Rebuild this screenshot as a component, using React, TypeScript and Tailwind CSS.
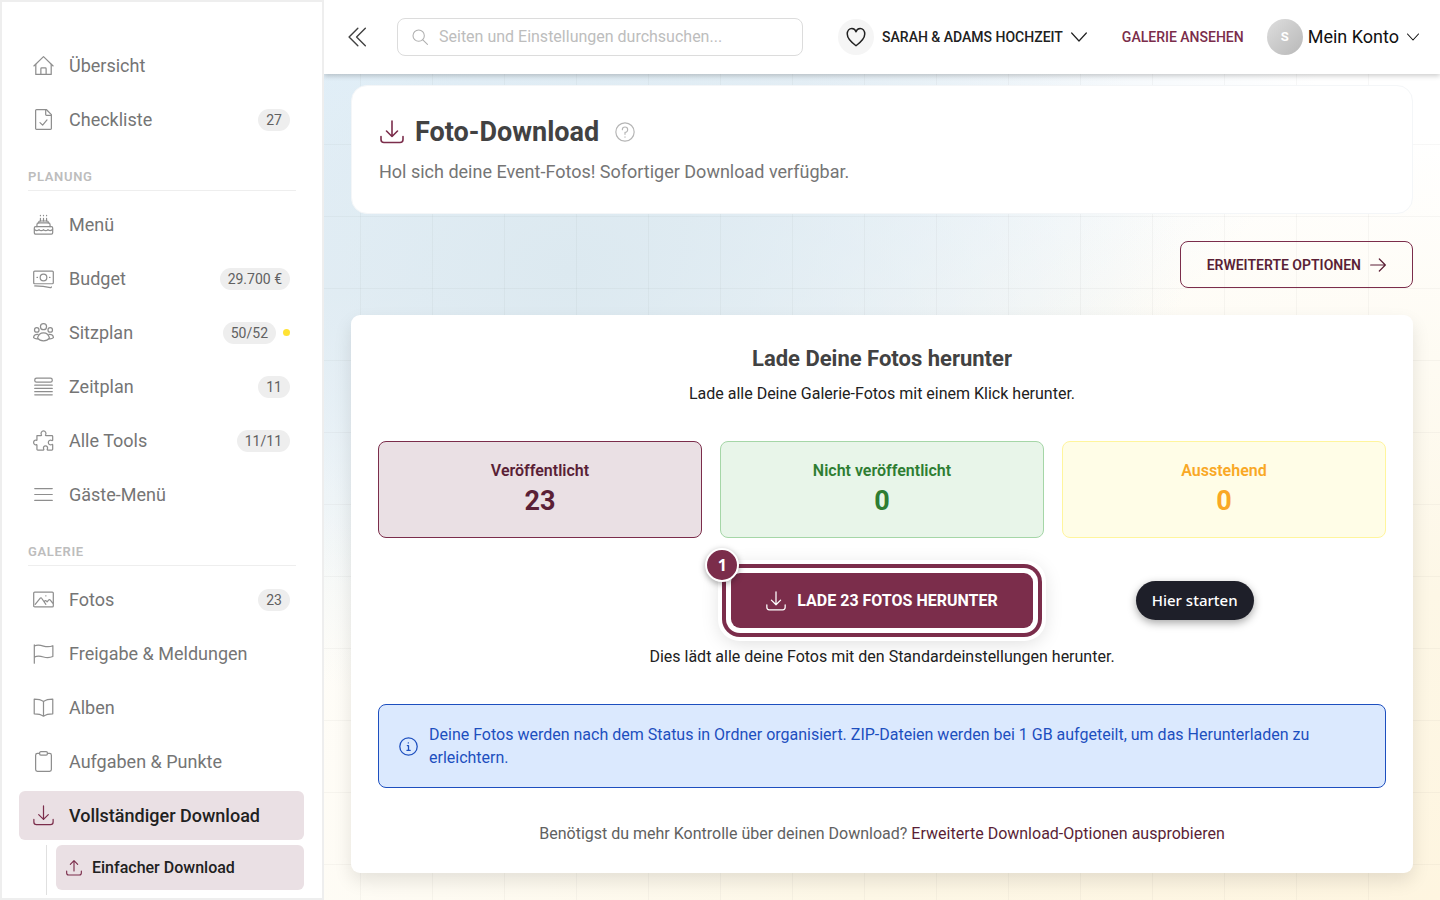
import type { ReactNode } from "react";
import clsx from "clsx";

type IconName =
  | "home"
  | "checklist"
  | "cake"
  | "cash"
  | "people"
  | "timeline"
  | "puzzle"
  | "lines"
  | "image"
  | "flag"
  | "book"
  | "clipboard"
  | "download"
  | "upload"
  | "search"
  | "collapse"
  | "heart"
  | "chevron"
  | "arrow"
  | "help"
  | "info";

const icons: Record<IconName, ReactNode> = {
  home: (
    <>
      <path d="M1 12.5 12 1.8l11 10.7" />
      <path d="M3.2 10.6v11.6h17.6V10.6" />
      <path d="M9 22.2v-6.6a1 1 0 0 1 1-1h4a1 1 0 0 1 1 1v6.6" />
    </>
  ),
  checklist: (
    <>
      <path d="M3 1.8a1 1 0 0 1 1-1h11.5L21 6.5v15.7a1 1 0 0 1-1 1H4a1 1 0 0 1-1-1z" />
      <path d="M14.5 1v5.2a1 1 0 0 0 1 1H21" />
      <path d="m8 15.5 3 3 5-6" />
    </>
  ),
  cake: (
    <>
      <rect x="1.5" y="14.5" width="21" height="8.5" rx="1.5" />
      <path d="M1.7 17.5c2 2 3.5 2 5.2.4 1.7 1.6 3.4 1.6 5.1 0 1.7 1.6 3.4 1.6 5.1 0 1.7 1.6 3.2 1.6 5.2-.4" />
      <path d="M4.5 14.5v-2.3a2 2 0 0 1 2-2h11a2 2 0 0 1 2 2v2.3" />
      <path d="M6.5 10.2V9.5A1.5 1.5 0 0 1 8 8h8a1.5 1.5 0 0 1 1.5 1.5v.7" />
      <path d="M8.5 8V5M12 8V5M15.5 8V5M8.5 2v-.5M12 2v-.5M15.5 2v-.5" />
    </>
  ),
  cash: (
    <>
      <rect x="0.8" y="3.5" width="22.4" height="14.5" rx="1.2" />
      <circle cx="12" cy="10.8" r="3.8" />
      <path d="M4.6 10.8h.5M18.9 10.8h.5" />
      <path d="M2 20.5c6 .2 12 .7 17.8 2 .7.1 1.2-.3 1.2-1" />
    </>
  ),
  people: (
    <>
      <circle cx="12" cy="5.3" r="3.5" />
      <circle cx="4.3" cy="9" r="2.6" />
      <circle cx="19.7" cy="9" r="2.6" />
      <path d="M5.2 18.5c.8-4 3.3-6 6.8-6s6 2 6.8 6c-1.8 2.3-4 3-6.8 3s-5-.7-6.8-3z" />
      <path d="M5.3 19.3c-2 .2-3.6-.3-4.7-1.4.3-2.7 2-4.2 5.2-3.8M18.7 19.3c2 .2 3.6-.3 4.7-1.4-.3-2.7-2-4.2-5.2-3.8" />
    </>
  ),
  timeline: (
    <>
      <rect x="2" y="2.5" width="20" height="4.5" rx="2" />
      <path d="M2 10.5h20M2 14.2h20M2 17.9h20M2 21.5h20" />
    </>
  ),
  puzzle: (
    <path d="M4.5 6.5h4.7c.6 0 .7-.5.4-1C8.5 3.5 9.8 1 12 1s3.5 2.5 2.4 4.5c-.3.5-.2 1 .4 1h6.7a1 1 0 0 1 1 1v4c0 .6-.5.7-1 .4-2-1.1-4 .3-4 2.3s2 3.4 4 2.3c.5-.3 1-.2 1 .4v5a1 1 0 0 1-1 1h-4.7c-.6 0-.7-.5-.4-1 .9-1.9-.3-3.7-2.1-3.7s-3 1.8-2.1 3.7c.3.5.2 1-.4 1H5.5a1 1 0 0 1-1-1v-4.6c0-.6-.5-.7-1-.4C2.3 17.5.7 16 .7 14.2s1.6-3.3 3.3-2.5c.3.2.5 0 .5-.4z" />
  ),
  lines: <path d="M2 5.2h20M2 12h20M2 18.8h20" />,
  image: (
    <>
      <rect x="0.8" y="3.5" width="22.4" height="17" rx="1.2" />
      <path d="M2.5 17.5 8.3 10.5a1 1 0 0 1 1.6.1l4.8 6.9M12.8 14.8l.4-.9a1.3 1.3 0 0 1 2.2 0l.7.7 1.7-2a1.3 1.3 0 0 1 2 0l2.7 3.4" />
      <path d="M14.6 7.8h.2" />
    </>
  ),
  flag: (
    <path d="M1.5 23V2M1.5 3.4c3.6-1.6 6.8-1 10.5.1s7 1.2 10.7-.4v12.4c-3.7 1.6-7 1.6-10.7.5s-6.9-1.6-10.5.1" />
  ),
  book: (
    <path d="M12 5.2c-2.8-2-6.5-2.7-10.6-2.7v16.7c4.1 0 7.8.7 10.6 2.7 2.8-2 6.5-2.7 10.6-2.7V2.5C18.5 2.5 14.8 3.2 12 5.2zm0 0v16.5" />
  ),
  clipboard: (
    <>
      <path d="M7.5 2.8H5a2 2 0 0 0-2 2v16.4a2 2 0 0 0 2 2h14a2 2 0 0 0 2-2V4.8a2 2 0 0 0-2-2h-2.5" />
      <rect x="7.5" y="0.8" width="9" height="3.8" rx="1.5" />
    </>
  ),
  download: (
    <>
      <path d="M12 1v15.5M6.5 11l5.5 5.5 5.5-5.5" />
      <path d="M1 16.5v3a3 3 0 0 0 3 3h16a3 3 0 0 0 3-3v-3" />
    </>
  ),
  upload: (
    <>
      <path d="M12 16.5V1M6.5 6.5 12 1l5.5 5.5" />
      <path d="M1 16.5v3a3 3 0 0 0 3 3h16a3 3 0 0 0 3-3v-3" />
    </>
  ),
  search: (
    <>
      <circle cx="10" cy="10" r="8.5" />
      <path d="m16.2 16.2 7 7" />
    </>
  ),
  collapse: <path d="M13 1.5 2.5 12 13 22.5M22 1.5 11.5 12 22 22.5" />,
  heart: (
    <path d="M12 22.5c-5.5-4-10.5-8.3-10.5-14C1.5 4.5 4 1.7 7 1.7c2.4 0 4.3 1.5 5 4 .7-2.5 2.6-4 5-4 3 0 5.5 2.8 5.5 6.8 0 5.7-5 10-10.5 14z" />
  ),
  chevron: <path d="m1 6 11 12L23 6" />,
  arrow: <path d="M1 12h22M14 3l9 9-9 9" />,
  help: (
    <>
      <circle cx="12" cy="12" r="11" />
      <path d="M8.8 9.2A3.2 3.2 0 1 1 12 12.4v2.4M12 17.8v.5" />
    </>
  ),
  info: (
    <>
      <circle cx="12" cy="12" r="11" />
      <path d="M10.5 10.8H12v6M10 16.8h4.2M11.7 7.5h.2" />
    </>
  ),
};

function Icon({ name, className, stroke = 1.4 }: { name: IconName; className?: string; stroke?: number }) {
  return (
    <svg
      viewBox="0 0 24 24"
      fill="none"
      stroke="currentColor"
      strokeWidth={stroke}
      strokeLinecap="round"
      strokeLinejoin="round"
      aria-hidden="true"
      className={clsx("shrink-0", className)}
    >
      {icons[name]}
    </svg>
  );
}

interface NavItem {
  label: string;
  icon: IconName;
  badge?: string;
  dot?: boolean;
  active?: boolean;
}

const groups: { title?: string; items: NavItem[] }[] = [
  {
    items: [
      { label: "Übersicht", icon: "home" },
      { label: "Checkliste", icon: "checklist", badge: "27" },
    ],
  },
  {
    title: "Planung",
    items: [
      { label: "Menü", icon: "cake" },
      { label: "Budget", icon: "cash", badge: "29.700 €" },
      { label: "Sitzplan", icon: "people", badge: "50/52", dot: true },
      { label: "Zeitplan", icon: "timeline", badge: "11" },
      { label: "Alle Tools", icon: "puzzle", badge: "11/11" },
      { label: "Gäste-Menü", icon: "lines" },
    ],
  },
  {
    title: "Galerie",
    items: [
      { label: "Fotos", icon: "image", badge: "23" },
      { label: "Freigabe & Meldungen", icon: "flag" },
      { label: "Alben", icon: "book" },
      { label: "Aufgaben & Punkte", icon: "clipboard" },
      { label: "Vollständiger Download", icon: "download", active: true },
    ],
  },
];

const stats = [
  { label: "Veröffentlicht", value: 23, style: "border-[#7b2d4b] bg-[#eae0e4] text-[#5a1f36]" },
  { label: "Nicht veröffentlicht", value: 0, style: "border-[#a5d6a7] bg-[#e8f5e9] text-[#2e7d32]" },
  { label: "Ausstehend", value: 0, style: "border-[#fff59d] bg-[#fffde7] text-[#f9a825]" },
];

function Sidebar() {
  return (
    <aside className="sticky top-0 z-20 h-screen w-[324px] shrink-0 overflow-hidden border-2 border-[#eeeeee] bg-white pt-[39px] pr-[18px] pl-[17px]">
      <nav>
        {groups.map((group, i) => (
          <div key={i}>
            {group.title && (
              <h2 className="mt-[23px] mr-2 mb-[9px] ml-[9px] border-b border-[#eeeeee] pb-[3px] text-[13px] leading-5 font-semibold tracking-wider text-[#bdbdbd] uppercase">
                {group.title}
              </h2>
            )}
            <ul className="flex flex-col gap-[5px]">
              {group.items.map((item) => (
                <li key={item.label}>
                  <a
                    href="#"
                    className={clsx(
                      "flex h-[49px] items-center rounded-md px-[14px] text-lg",
                      item.active ? "bg-[#eae0e4] font-medium text-[#212121]" : "text-[#757575]",
                    )}
                  >
                    <Icon
                      name={item.icon}
                      className={clsx("mr-[15px] size-[21px]", item.active ? "text-[#7b2d4b]" : "text-[#8e8e8e]")}
                    />
                    <span>{item.label}</span>
                    {item.badge && (
                      <span className="ml-auto rounded-full bg-[#eeeeee] px-2 text-sm leading-[22px] text-[#616161]">
                        {item.badge}
                      </span>
                    )}
                    {item.dot && <span className="ml-[7px] size-[7px] rounded-full bg-[#ffe234]" />}
                  </a>
                </li>
              ))}
            </ul>
          </div>
        ))}
        <div className="mt-[5px] ml-[27px] border-l border-[#e0e0e0] pb-[5px] pl-[9px]">
          <a
            href="#"
            className="flex h-[45px] items-center gap-[10px] rounded-md bg-[#eae0e4] pl-[10px] text-base font-medium text-[#212121]"
          >
            <Icon name="upload" className="size-4 text-[#7b2d4b]" stroke={1.7} />
            Einfacher Download
          </a>
        </div>
      </nav>
    </aside>
  );
}

function TopBar() {
  return (
    <header className="sticky top-0 z-10 flex h-[74px] items-center bg-white pr-[21px] pl-[23px] shadow-[0_2px_5px_rgba(0,0,0,0.2)]">
      <button type="button" aria-label="Menü einklappen" className="mr-[30px] text-[#424242]">
        <Icon name="collapse" className="size-5" stroke={1.7} />
      </button>
      <label className="flex h-[38px] w-[406px] min-w-0 items-center gap-[11px] rounded-lg border border-[#dcdcdc] px-[14px]">
        <Icon name="search" className="size-4 text-[#b0b0b0]" stroke={1.6} />
        <input
          type="search"
          aria-label="Suche"
          placeholder="Seiten und Einstellungen durchsuchen..."
          className="min-w-0 flex-1 bg-transparent text-base outline-none placeholder:text-[#bdbdbd]"
        />
      </label>
      <div className="ml-auto flex shrink-0 items-center">
        <button type="button" className="flex items-center gap-2 text-sm font-medium text-[#212121]">
          <span className="flex size-9 items-center justify-center rounded-full bg-[#f5f5f5]">
            <Icon name="heart" className="size-5" stroke={1.8} />
          </span>
          SARAH &amp; ADAMS HOCHZEIT
          <Icon name="chevron" className="size-4" stroke={1.8} />
        </button>
        <a href="#" className="ml-[35px] text-sm font-medium text-[#7b2d4b]">
          GALERIE ANSEHEN
        </a>
        <button type="button" className="ml-[23px] flex items-center text-lg text-[#111111]">
          <span className="mr-[5px] flex size-9 items-center justify-center rounded-full bg-linear-to-br from-[#dedede] to-[#b8b8b8] text-[13px] font-bold text-white">
            S
          </span>
          Mein Konto
          <Icon name="chevron" className="ml-2 size-3" stroke={2.2} />
        </button>
      </div>
    </header>
  );
}

export default function App() {
  return (
    <div className="flex min-h-screen bg-white font-[Roboto,sans-serif] text-[#212121]">
      <Sidebar />
      <div className="relative min-w-0 flex-1 bg-[radial-gradient(ellipse_55%_50%_at_22%_30%,#dce9f0_0%,transparent_100%),radial-gradient(ellipse_90%_65%_at_0%_0%,#e3f2fd_0%,#e8f1f8_50%,transparent_100%),radial-gradient(ellipse_130%_85%_at_100%_100%,#fef5e0_0%,#fdf7e6_40%,transparent_100%)]">
        {/* 72px grid, first column line sits 36px in */}
        <div className="absolute inset-0 bg-[linear-gradient(to_right,rgba(0,0,0,0.03)_1px,transparent_1px),linear-gradient(to_bottom,rgba(0,0,0,0.03)_1px,transparent_1px)] bg-[size:72px_72px] bg-[position:36px_0]" />
        <TopBar />
        <main className="relative flex flex-col gap-[27px] px-[27px] pt-[11px] pb-[27px]">
          <section className="rounded-2xl border border-[#f4f6f8] bg-white px-[27px] pt-7 pb-[27px]">
            <div className="flex items-center">
              <Icon name="download" className="mr-[11px] ml-[1px] size-6 text-[#7b2d4b]" stroke={1.6} />
              <h1 className="text-[27px] leading-9 font-bold text-[#424242]">Foto-Download</h1>
              <button type="button" aria-label="Hilfe" className="ml-4 text-[#b5b5b5]">
                <Icon name="help" className="size-5" />
              </button>
            </div>
            <p className="mt-2 text-lg leading-7 text-[#757575]">
              Hol sich deine Event-Fotos! Sofortiger Download verfügbar.
            </p>
          </section>

          <a
            href="#"
            className="flex h-[47px] items-center gap-[9px] self-end rounded-lg border border-[#7b2d4b] px-[26px] text-sm font-semibold text-[#5a1f36]"
          >
            ERWEITERTE OPTIONEN
            <Icon name="arrow" className="size-4" stroke={1.8} />
          </a>

          <section className="flex flex-col items-center rounded-[9px] bg-white px-[27px] pt-7 pb-[27px] shadow-[0_8px_18px_rgba(0,0,0,0.1)]">
            <h2 className="text-[22px] leading-8 font-bold text-[#424242]">Lade Deine Fotos herunter</h2>
            <p className="mt-[7px] text-base leading-6">Lade alle Deine Galerie-Fotos mit einem Klick herunter.</p>

            <div className="mt-[35px] grid w-full grid-cols-3 gap-[18px]">
              {stats.map((s) => (
                <div key={s.label} className={clsx("h-[97px] rounded-lg border pt-[17px] text-center", s.style)}>
                  <div className="text-base leading-6 font-semibold">{s.label}</div>
                  <div className="text-[27px] leading-9 font-bold">{s.value}</div>
                </div>
              ))}
            </div>

            <div className="relative mt-[35px]">
              <button
                type="button"
                className="flex h-[55px] items-center gap-[11px] rounded-[9px] bg-[#7b2d4b] px-[35px] text-base font-bold text-white shadow-[0_0_0_5px_#fff,0_0_0_9px_#7b2d4b,0_0_0_13px_#fff,0_4px_20px_10px_rgba(0,0,0,0.15)]"
              >
                <Icon name="download" className="size-5" stroke={1.5} />
                LADE 23 FOTOS HERUNTER
              </button>
              <span className="absolute -top-[25px] -left-[26px] flex size-[34px] items-center justify-center rounded-full border-2 border-white bg-[#7b2d4b] font-['Noto_Sans',sans-serif] text-base font-bold text-white shadow-[0_2px_6px_rgba(0,0,0,0.35)]">
                1
              </span>
              <span className="absolute top-2 left-full ml-[103px] flex h-[39px] items-center rounded-full bg-[#1e1f29] px-4 font-['Noto_Sans',sans-serif] text-[15px] font-medium whitespace-nowrap text-white shadow-[0_3px_8px_rgba(0,0,0,0.35)]">
                Hier starten
              </span>
            </div>
            <p className="mt-[17px] text-base leading-6">
              Dies lädt alle deine Fotos mit den Standardeinstellungen herunter.
            </p>

            <div className="mt-[35px] flex w-full items-center gap-[11px] rounded-lg border border-[#1d4fbf] bg-[#dbe9fe] px-5 py-[18px] text-[#1d4fbf]">
              <Icon name="info" className="size-[19px]" stroke={1.6} />
              <p className="text-base leading-[23px]">
                Deine Fotos werden nach dem Status in Ordner organisiert. ZIP-Dateien werden bei 1 GB aufgeteilt, um das
                Herunterladen zu erleichtern.
              </p>
            </div>

            <p className="mt-[34px] text-base leading-6 text-[#616161]">
              Benötigst du mehr Kontrolle über deinen Download?{" "}
              <a href="#" className="text-[#5a1f36]">
                Erweiterte Download-Optionen ausprobieren
              </a>
            </p>
          </section>
        </main>
      </div>
    </div>
  );
}
